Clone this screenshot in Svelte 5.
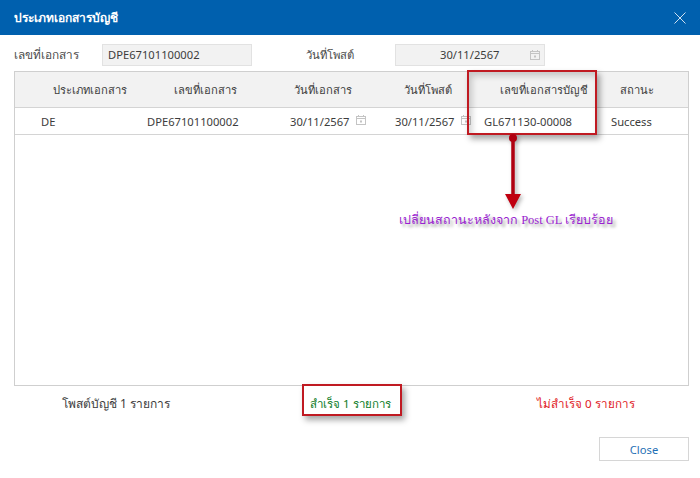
<script lang="ts">
  const headers = ['ประเภทเอกสาร', 'เลขที่เอกสาร', 'วันที่เอกสาร', 'วันที่โพสต์', 'เลขที่เอกสารบัญชี', 'สถานะ'];
</script>

{#snippet calendar(cls: string)}
  <svg class={cls} viewBox="0 0 10 10" width="10" height="10" fill="none" stroke="#c4c4c4" stroke-width="1">
    <rect x="0.5" y="1.5" width="9" height="8" />
    <path d="M0.5 3.5H9.5M2.5 0V2M7.5 0V2" />
    <rect x="4" y="5.5" width="2" height="2" fill="#c4c4c4" stroke="none" />
  </svg>
{/snippet}

<div class="dialog">
  <header class="titlebar">
    <h1>ประเภทเอกสารบัญชี</h1>
    <svg class="close-x" viewBox="0 0 12 12" width="12" height="12" stroke="#cfe0f0" stroke-width="1" fill="none">
      <path d="M0.5 0.5L11.5 11.5M11.5 0.5L0.5 11.5" />
    </svg>
  </header>

  <div class="form">
    <span class="label">เลขที่เอกสาร</span>
    <div class="field doc">DPE67101100002</div>
    <span class="label post">วันที่โพสต์</span>
    <div class="field date">
      <span>30/11/2567</span>
      {@render calendar('cal-field')}
    </div>
  </div>

  <div class="table">
    <div class="row head">
      {#each headers as h, i}
        <div class={`cell h${i}`}>{h}</div>
      {/each}
    </div>
    <div class="row body">
      <div class="cell d0">DE</div>
      <div class="cell d1">DPE67101100002</div>
      <div class="cell d2">30/11/2567 {@render calendar('cal-cell')}</div>
      <div class="cell d3">30/11/2567 {@render calendar('cal-cell')}</div>
      <div class="cell d4">GL671130-00008</div>
      <div class="cell d5">Success</div>
    </div>
  </div>

  <div class="summary">
    <span class="total">โพสต์บัญชี 1 รายการ</span>
    <span class="ok">สำเร็จ 1 รายการ</span>
    <span class="fail">ไม่สำเร็จ 0 รายการ</span>
  </div>

  <div class="actions">
    <button type="button">Close</button>
  </div>

  <!-- annotations drawn over the screenshot -->
  <div class="mark mark-gl"></div>
  <div class="mark mark-ok"></div>
  <svg class="arrow" viewBox="0 0 20 80" width="20" height="80">
    <circle cx="10" cy="4" r="4" fill="#b00010" />
    <rect x="8.25" y="4" width="3.5" height="60" fill="#b00010" />
    <path d="M2 60H18L10 75Z" fill="#c00010" />
  </svg>
  <div class="note">เปลี่ยนสถานะหลังจาก Post GL เรียบร้อย</div>
</div>

<style>
  :global(body) {
    margin: 0;
    background: #fff;
  }

  .dialog {
    position: relative;
    width: 700px;
    height: 478px;
    overflow: hidden;
    background: #fff;
    color: #3c3c3c;
    font-family: 'Noto Sans', 'Liberation Sans', sans-serif;
    font-size: 11.2px;
  }

  .titlebar {
    height: 35px;
    background: #0060ae;
    display: flex;
    align-items: center;
    justify-content: space-between;
    padding: 0 14px;
    box-sizing: border-box;
  }

  h1 {
    margin: 0;
    font-size: 12px;
    font-weight: 700;
    color: #fff;
  }

  .form {
    height: 36px;
    display: flex;
    align-items: center;
    padding: 3px 0 0 14px;
    box-sizing: border-box;
  }

  .label {
    color: #4a4a4a;
    font-size: 11.8px;
  }

  .label:first-child {
    width: 88px;
  }

  .post {
    margin-left: 54px;
    width: 89px;
    font-size: 11.3px;
  }

  .field {
    height: 22px;
    box-sizing: border-box;
    border: 1px solid #e2e2e2;
    background: #f2f2f2;
    display: flex;
    align-items: center;
  }

  .doc {
    width: 150px;
    padding-left: 5px;
  }

  .date {
    width: 150px;
    padding-left: 44px;
    position: relative;
  }

  .cal-field {
    position: absolute;
    right: 4px;
    top: 5px;
  }

  .cal-cell {
    margin-left: 4px;
    vertical-align: 1px;
  }

  .table {
    margin: 0 11px 0 14px;
    height: 315px;
    box-sizing: border-box;
    border: 1px solid #cfcfcf;
  }

  .row {
    display: grid;
    grid-template-columns: 122px 111px 124px 104px 124px 1fr;
    align-items: center;
    box-sizing: border-box;
    border-bottom: 1px solid #d4d4d4;
  }

  .head {
    height: 36px;
    background: #f2f2f2;
  }

  .body {
    height: 27px;
  }

  .cell {
    white-space: nowrap;
  }

  .h0, .h1, .h2, .h3, .h4 {
    text-align: right;
  }

  .h0 { padding-right: 10px; }
  .h1 { padding-right: 11px; }
  .h2 { padding-right: 20px; }
  .h3 { padding-right: 24px; }
  .h4 { padding-right: 12px; }
  .h5 { padding-left: 20px; }

  .d0 { padding-left: 26px; }
  .d1 { padding-left: 10px; }
  .d2 { padding-left: 42px; }
  .d3 { padding-left: 23px; }
  .d4 { padding-left: 8px; }
  .d5 { padding-left: 11px; }

  .summary {
    display: grid;
    grid-template-columns: 248px 227px 1fr;
    padding-left: 62px;
    margin-top: 9px;
    line-height: 18px;
  }

  .total {
    font-size: 12px;
  }

  .ok {
    color: #0a7a1e;
    font-size: 11.5px;
  }

  .fail {
    color: #e0161c;
    font-size: 11.6px;
  }

  .actions {
    display: flex;
    justify-content: flex-end;
    padding-right: 11px;
    margin-top: 24px;
  }

  button {
    width: 90px;
    height: 24px;
    border: 1px solid #d6d6d6;
    background: #fff;
    color: #1f6fb5;
    font: inherit;
    padding: 0;
  }

  .mark {
    position: absolute;
    box-sizing: border-box;
    border: 2px solid #c01a22;
    box-shadow: 3px 4px 6px rgba(0, 0, 0, 0.35), inset 3px 4px 6px rgba(0, 0, 0, 0.18);
  }

  .mark-gl {
    left: 467px;
    top: 70px;
    width: 130px;
    height: 65px;
  }

  .mark-ok {
    left: 302px;
    top: 384px;
    width: 100px;
    height: 32px;
    box-shadow: 3px 4px 6px rgba(0, 0, 0, 0.35);
  }

  .arrow {
    position: absolute;
    left: 503px;
    top: 134px;
    filter: drop-shadow(2px 2px 2px rgba(0, 0, 0, 0.3));
  }

  .note {
    position: absolute;
    left: 399px;
    top: 210px;
    color: #9a1fd0;
    font-family: 'Liberation Serif', 'Noto Sans', serif;
    font-size: 12.5px;
    white-space: nowrap;
    text-shadow: 3px 3px 3px rgba(0, 0, 0, 0.35);
  }
</style>
